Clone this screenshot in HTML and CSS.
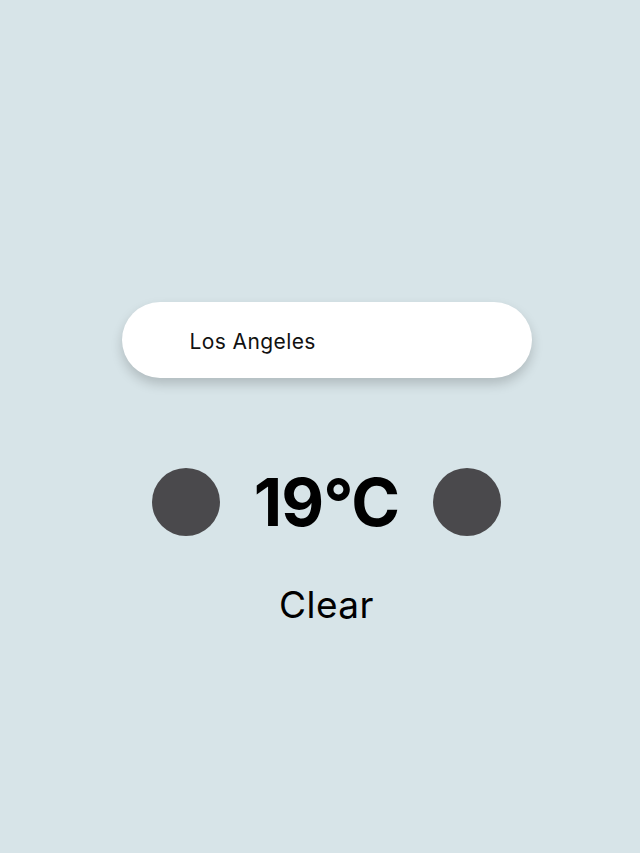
FILE: index.html
```html
<!DOCTYPE html>
<html lang="en">
<head>
  <meta charset="UTF-8" />
  <meta name="viewport" content="width=device-width, initial-scale=1.0"/>
  <title>Weather</title>
  <link rel="stylesheet" href="styles.css">
</head>
<body>
  <div class="app">
    <div class="search">
      <input type="text" class="search-input" value="Los Angeles">
    </div>

    <div class="weather">
      <div class="dot"></div>
      <div class="temp">19°C</div>
      <div class="dot"></div>
    </div>

    <div class="desc">Clear</div>
  </div>
</body>
</html>
```

FILE: styles.css
```css
* { box-sizing: border-box; }
body {
  font-family: 'Inter', 'Noto Sans', sans-serif;
  margin: 0;
  background: #d7e4e8;
  color: #000;
  min-height: 100vh;
}
.app {
  display: flex;
  flex-direction: column;
  align-items: center;
  padding: 302px 0 0 13px;
}
.search {
  width: 410px;
  height: 76px;
  background: #fff;
  border-radius: 38px;
  box-shadow: 0 6px 12px rgba(0, 0, 0, 0.18);
  display: flex;
  align-items: center;
  padding: 2px 30px 0 68px;
}
.search-input {
  border: none;
  outline: none;
  background: transparent;
  width: 100%;
  font-family: inherit;
  font-size: 21px;
  letter-spacing: 0.4px;
  color: #111;
  padding: 0;
}
.weather {
  display: flex;
  align-items: center;
  gap: 34px;
  margin-top: 90px;
}
.dot {
  width: 68px;
  height: 68px;
  border-radius: 50%;
  background: #4a494c;
}
.temp {
  font-size: 66px;
  font-weight: 700;
  letter-spacing: -1px;
  line-height: 1;
}
.desc {
  font-size: 37px;
  letter-spacing: 0.5px;
  margin-top: 46px;
}
```
